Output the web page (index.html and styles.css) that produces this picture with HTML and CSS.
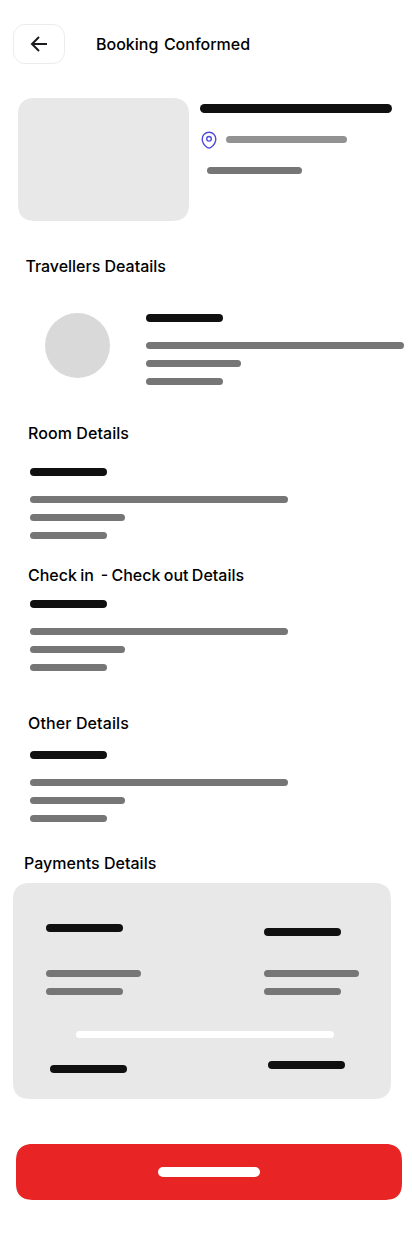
FILE: index.html
```html
<!DOCTYPE html>
<html lang="en">
<head>
<meta charset="utf-8">
<meta name="viewport" content="width=device-width, initial-scale=1">
<title>Booking Conformed</title>
<link rel="stylesheet" href="styles.css">
</head>
<body>
<main class="screen">
  <header class="topbar">
    <button class="back" aria-label="Back">
      <svg width="20" height="20" viewBox="0 0 20 20" fill="none" stroke="#1b1b20" stroke-width="2"><path d="M18 10H3M10 3L3 10l7 7"/></svg>
    </button>
    <h1 class="heading heading-page">Booking&nbsp; Conformed</h1>
  </header>

  <section class="hotel">
    <div class="photo"></div>
    <div class="hotel-info">
      <div class="bar bar-name"></div>
      <div class="location">
        <svg width="18" height="20" viewBox="0 0 18 20" fill="none" stroke="#4f4bdc" stroke-width="1.4"><path d="M9 2.300C5.200 2.300 2.200 5 2.200 9c0 3.300 2.100 6.300 4.700 8.200 1.400 1.050 2.800 1.050 4.200 0C13.700 15.300 15.800 12.300 15.800 9 15.800 5 12.800 2.300 9 2.300Z"/><circle cx="9" cy="8.800" r="2.300"/></svg>
        <div class="bar bar-place"></div>
      </div>
      <div class="bar bar-medium bar-price"></div>
    </div>
  </section>

  <section class="travellers">
    <h2 class="heading heading-travellers">Travellers Deatails</h2>
    <div class="traveller">
      <div class="avatar"></div>
      <div class="lines">
        <div class="bar bar-title"></div>
        <div class="bar bar-long"></div>
        <div class="bar bar-medium"></div>
        <div class="bar bar-short"></div>
      </div>
    </div>
  </section>

  <section class="details room">
    <h2 class="heading heading-room">Room Details</h2>
    <div class="lines">
      <div class="bar bar-title"></div>
      <div class="bar bar-long"></div>
      <div class="bar bar-medium"></div>
      <div class="bar bar-short"></div>
    </div>
  </section>

  <section class="details dates">
    <h2 class="heading heading-dates">Check in&nbsp; - Check out Details</h2>
    <div class="lines">
      <div class="bar bar-title"></div>
      <div class="bar bar-long"></div>
      <div class="bar bar-medium"></div>
      <div class="bar bar-short"></div>
    </div>
  </section>

  <section class="details other">
    <h2 class="heading heading-other">Other Details</h2>
    <div class="lines">
      <div class="bar bar-title"></div>
      <div class="bar bar-long"></div>
      <div class="bar bar-medium"></div>
      <div class="bar bar-short"></div>
    </div>
  </section>

  <section class="payments">
    <h2 class="heading heading-payments">Payments Details</h2>
    <div class="card">
      <div class="columns">
        <div class="lines">
          <div class="bar bar-title"></div>
          <div class="bar bar-medium"></div>
          <div class="bar bar-short"></div>
        </div>
        <div class="lines amounts">
          <div class="bar bar-title"></div>
          <div class="bar bar-medium"></div>
          <div class="bar bar-short"></div>
        </div>
      </div>
      <div class="bar divider"></div>
      <div class="total">
        <div class="bar bar-title"></div>
        <div class="bar bar-title total-amount"></div>
      </div>
    </div>
  </section>

  <button class="cta" aria-label="Continue"><span class="bar cta-label"></span></button>
</main>
</body>
</html>
```
FILE: styles.css
```css
* { box-sizing: border-box; margin: 0; padding: 0; }
body { background: #fff; font-family: Inter, "Liberation Sans", sans-serif; color: #000; }
button { border: 0; font: inherit; }

.screen { width: 412px; height: 1237px; padding-top: 24px; overflow: hidden; }
.heading { font-size: 16px; font-weight: 500; line-height: 24px; white-space: nowrap; }
.heading-page { word-spacing: -1.5px; }
.heading-travellers { margin-left: -0.6px; letter-spacing: -0.02px; }
.heading-room { letter-spacing: 0.07px; }
.heading-dates { word-spacing: -0.9px; }
.heading-other { letter-spacing: 0.12px; }

.topbar { display: flex; align-items: center; gap: 31px; height: 40px; padding-left: 13px; }
.back {
  display: flex; align-items: center; justify-content: center;
  width: 52px; height: 40px; background: #fff;
  border: 1px solid #ececec; border-radius: 12px;
}

.bar { height: 7px; border-radius: 4px; background: #767676; }
.bar-title { width: 77px; height: 8px; background: #101010; }
.bar-long { width: 258px; }
.bar-medium { width: 95px; }
.bar-short { width: 77px; }
.lines { display: flex; flex-direction: column; gap: 11px; }
.lines .bar-title { margin-bottom: 9px; }

.hotel { display: flex; gap: 11px; padding: 34px 0 0 18px; }
.photo { width: 171px; height: 123px; border-radius: 14px; background: #e8e8e8; }
.hotel-info { padding-top: 6px; }
.bar-name { width: 192px; height: 9px; border-radius: 4.5px; background: #101010; }
.location { display: flex; align-items: center; gap: 8px; height: 20px; margin-top: 17px; }
.location svg { flex: none; }
.bar-place { width: 121px; margin-top: -1px; background: #929292; }
.bar-price { margin: 17px 0 0 7px; }

.travellers { padding: 33px 0 0 26px; }
.traveller { display: flex; gap: 36px; padding: 35px 0 0 19px; }
.traveller .lines { padding-top: 1px; }
.avatar { width: 65px; height: 65px; border-radius: 50%; background: #d9d9d9; }

.details { padding-left: 28px; }
.details .lines { padding-left: 2px; }
.room { margin-top: 36px; }
.room .lines { margin-top: 23px; }
.dates { margin-top: 24px; }
.dates .lines { margin-top: 13px; }
.other { margin-top: 40px; }
.other .lines { margin-top: 16px; }

.payments { margin-top: 29px; padding-left: 13px; }
.heading-payments { padding-left: 11px; letter-spacing: 0.03px; }
.card { width: 378px; height: 216px; margin-top: 8px; padding: 41px 46px 0 33px; border-radius: 14px; background: #e8e8e8; }
.columns { display: flex; gap: 123px; }
.card .lines .bar-title { margin-bottom: 27px; }
.card .amounts { padding-top: 4px; }
.card .amounts .bar-title { margin-bottom: 23px; }
.divider { width: 258px; margin: 36px 0 0 30px; background: #fff; }
.total { display: flex; gap: 141px; align-items: flex-end; padding: 23px 0 0 4px; }
.total-amount { margin-bottom: 4px; }

.cta {
  display: flex; align-items: center; justify-content: center;
  width: 386px; height: 56px; margin: 45px 0 0 16px;
  border-radius: 14px; background: #e82424;
}
.cta-label { width: 102px; height: 10px; border-radius: 5px; background: #fff; }

@supports (corner-shape: superellipse(1.4)) {
  .photo, .card, .cta { border-radius: 18px; corner-shape: superellipse(1.4); }
}
```
